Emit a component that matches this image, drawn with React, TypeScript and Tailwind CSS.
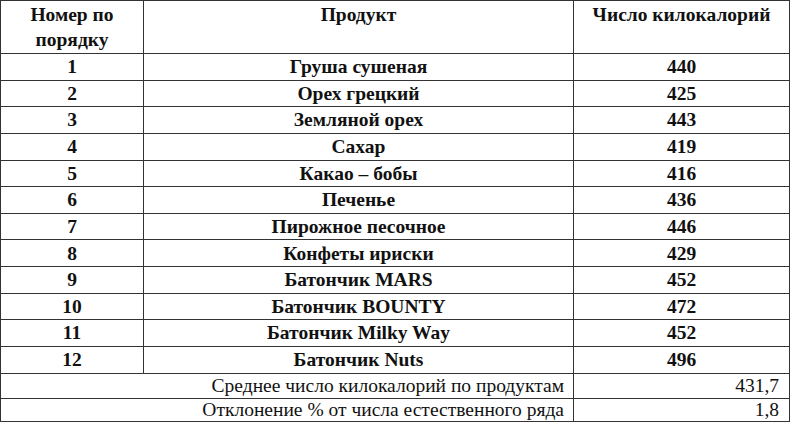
const rows = [
  { n: "1", name: "Груша сушеная", kcal: "440" },
  { n: "2", name: "Орех грецкий", kcal: "425" },
  { n: "3", name: "Земляной орех", kcal: "443" },
  { n: "4", name: "Сахар", kcal: "419" },
  { n: "5", name: "Какао – бобы", kcal: "416" },
  { n: "6", name: "Печенье", kcal: "436" },
  { n: "7", name: "Пирожное песочное", kcal: "446" },
  { n: "8", name: "Конфеты ириски", kcal: "429" },
  { n: "9", name: "Батончик MARS", kcal: "452" },
  { n: "10", name: "Батончик BOUNTY", kcal: "472" },
  { n: "11", name: "Батончик Milky Way", kcal: "452" },
  { n: "12", name: "Батончик Nuts", kcal: "496" }
]

const cell = "border border-[#333] text-center align-middle p-0"

export default function App() {
  return (
    <div className="w-[790px] h-[423px] bg-white text-[#111] font-[Liberation_Serif,Times_New_Roman,serif] text-[19.5px]">
      <table className="w-[789px] border-collapse table-fixed">
        <colgroup>
          <col className="w-[143px]" />
          <col className="w-[430px]" />
          <col className="w-[216px]" />
        </colgroup>
        <thead>
          <tr className="h-[53px] font-bold">
            <th className={`${cell} align-top leading-[25px] pt-[1px]`}>
              Номер по
              <br />
              порядку
            </th>
            <th className={`${cell} align-top leading-[25px] pt-[1px]`}>Продукт</th>
            <th className={`${cell} align-top leading-[25px] pt-[1px]`}>Число килокалорий</th>
          </tr>
        </thead>
        <tbody>
          {rows.map((r) => (
            <tr key={r.n} className="h-[26.65px] font-bold leading-none">
              <td className={cell}>{r.n}</td>
              <td className={cell}>{r.name}</td>
              <td className={cell}>{r.kcal}</td>
            </tr>
          ))}
          <tr className="h-[25px] leading-none">
            <td colSpan={2} className={`${cell} text-right pr-[9px]`}>
              Среднее число килокалорий по продуктам
            </td>
            <td className={`${cell} text-right pr-[10px]`}>431,7</td>
          </tr>
          <tr className="h-[23px] leading-none">
            <td colSpan={2} className={`${cell} text-right pr-[9px]`}>
              Отклонение % от числа естественного ряда
            </td>
            <td className={`${cell} text-right pr-[10px]`}>1,8</td>
          </tr>
        </tbody>
      </table>
    </div>
  )
}
